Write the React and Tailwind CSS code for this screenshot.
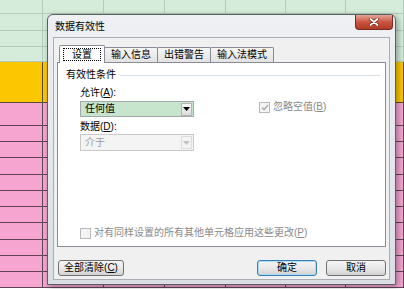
import React from 'react';

const COLS = ['w-[43px]', 'w-[61px]', 'w-[61px]', 'w-[61px]', 'w-[60px]', 'w-[60px]', 'w-[58px]'];

const TONES = {
  green: 'bg-[#d4ecd9] border-[#b4ccbb]',
  yellow: 'bg-[#fdc700] border-[#5d4b3c]',
  pink: 'bg-[#f6a4d0] border-[#5e4656]',
};

const ROWS = [
  ['h-[14px]', 'green'],
  ['h-[17px]', 'green'],
  ['h-[16px]', 'green'],
  ['h-[15px]', 'green'],
  ['h-[41px]', 'yellow'],
  ['h-[23px]', 'pink'],
  ['h-[16px]', 'pink'],
  ['h-[16px]', 'pink'],
  ['h-[17px]', 'pink'],
  ['h-[16px]', 'pink'],
  ['h-[16px]', 'pink'],
  ['h-[16px]', 'pink'],
  ['h-[17px]', 'pink'],
  ['h-[16px]', 'pink'],
  ['h-[16px]', 'pink'],
  ['h-[16px]', 'pink'],
];

const Sheet = () => (
  <div className="flex flex-col">
    {ROWS.map(([h, tone], i) => (
      <div key={i} className={`flex shrink-0 border-b ${h} ${TONES[tone]}`}>
        {COLS.map((w, j) => (
          <div key={j} className={`h-full shrink-0 border-r ${w} ${TONES[tone]}`} />
        ))}
      </div>
    ))}
  </div>
);

const Tab = ({ label, active }) => {
  if (active) {
    return (
      <div className="relative z-10 -mb-px flex h-[18px] w-[46px] items-center justify-center rounded-t-[2px] border border-b-0 border-[#898c95] bg-white">
        <span className="flex h-[13px] items-center border border-dotted border-black px-[8px]">{label}</span>
      </div>
    );
  }
  return (
    <div className="-ml-px flex h-[15px] items-center rounded-t-[2px] border border-b-0 border-[#898c95] bg-gradient-to-b from-[#f5f5f5] to-[#e2e2e2] px-[6px]">
      {label}
    </div>
  );
};

const Arrow = ({ color }) => (
  <svg width="7" height="4" viewBox="0 0 7 4">
    <path d="M0 0h7L3.5 4z" fill={color} />
  </svg>
);

const Combo = ({ value, disabled }) => (
  <div
    className={`flex w-[114px] items-center border pl-[4px] pr-px ${
      disabled
        ? 'h-[17px] border-[#c9c9c9] bg-[#f4f4f4] text-[#9a9a9a]'
        : 'h-[16px] border-[#a3a8ae] bg-[#c6e5cc] text-black'
    }`}
  >
    <span className="flex-1">{value}</span>
    <div
      className={`flex h-[13px] w-[11px] items-center justify-center border ${
        disabled ? 'border-[#dcdcdc] bg-[#f4f4f4]' : 'border-[#b5b5b5] bg-gradient-to-b from-[#f7f7f7] to-[#dcdcdc]'
      }`}
    >
      <Arrow color={disabled ? '#c4c4c4' : '#000'} />
    </div>
  </div>
);

const Check = ({ checked }) => (
  <div className="flex h-[11px] w-[11px] items-center justify-center border border-[#b8b8b8] bg-[#f4f4f4]">
    {checked && (
      <svg width="8" height="7" viewBox="0 0 8 7">
        <path d="M1 3.5l2 2.2L7 1" fill="none" stroke="#a9a9a9" strokeWidth="1.4" />
      </svg>
    )}
  </div>
);

const Button = ({ children, primary, className = '' }) => (
  <div
    className={`flex h-[16px] items-center justify-center rounded-[3px] border bg-gradient-to-b from-[#f4f4f4] via-[#e9e9e9] to-[#d2d2d2] ${
      primary ? 'border-[#3c7fb1] shadow-[inset_0_0_0_1px_#a9dbf6]' : 'border-[#707070]'
    } ${className}`}
  >
    {children}
  </div>
);

export default function App() {
  return (
    <div className="relative h-[289px] w-[404px] overflow-hidden font-['Liberation_Sans','Noto_Sans_CJK_SC',sans-serif] text-[10px] leading-[12px] text-black">
      <Sheet />

      <div className="absolute left-[47px] top-[14px] flex h-[271px] w-[349px] flex-col rounded-t-[6px] border border-[#5b5f66] bg-gradient-to-b from-[#eef0f3] to-[#dadee3] px-[5px] pb-[4px] shadow-[2px_2px_6px_rgba(0,0,0,0.35)]">
        <div className="flex h-[22px] shrink-0 items-start justify-between">
          <span className="mt-[6px] pl-[2px]">数据有效性</span>
          <div className="-mr-[3px] flex h-[15px] w-[38px] items-center justify-center rounded-b-[4px] border border-t-0 border-[#7a2a20] bg-gradient-to-b from-[#e3a597] via-[#c9553f] to-[#b23a24]">
            <svg width="10" height="8" viewBox="0 0 10 8">
              <path d="M1.5 1l7 6M8.5 1l-7 6" stroke="#5a1a10" strokeWidth="3" strokeLinecap="round" />
              <path d="M1.5 1l7 6M8.5 1l-7 6" stroke="#fff" strokeWidth="1.8" strokeLinecap="round" />
            </svg>
          </div>
        </div>

        <div className="flex flex-1 flex-col border border-[#a9aeb5] bg-[#f0f0f0] px-[3px]">
          <div className="flex h-[24px] shrink-0 items-end pl-[2px]">
            <Tab label="设置" active />
            <Tab label="输入信息" />
            <Tab label="出错警告" />
            <Tab label="输入法模式" />
          </div>

          <div className="flex h-[185px] shrink-0 flex-col border border-[#898c95] bg-white pl-[8px] pr-[5px] pt-[6px]">
            <div className="flex items-center gap-[4px]">
              <span>有效性条件</span>
              <div className="h-px flex-1 bg-[#d5dfe5]" />
            </div>

            <div className="pl-[14px]">
              <div className="mt-[6px]">
                允许(<u>A</u>):
              </div>
              <div className="mt-[2px] flex items-start">
                <Combo value="任何值" />
                <div className="ml-[65px] flex items-center gap-[3px] text-[#8a8a8a]">
                  <Check checked />
                  <span>
                    忽略空值(<u>B</u>)
                  </span>
                </div>
              </div>
              <div className="mt-[4px]">
                数据(<u>D</u>):
              </div>
              <div className="mt-px">
                <Combo value="介于" disabled />
              </div>

              <div className="mt-[76px] flex items-center gap-[3px] text-[#8a8a8a]">
                <Check />
                <span>
                  对有同样设置的所有其他单元格应用这些更改(<u>P</u>)
                </span>
              </div>
            </div>
          </div>

          <div className="mt-[13px] flex items-center">
            <Button className="ml-px w-[66px]">
              全部清除(<u>C</u>)
            </Button>
            <Button primary className="ml-auto w-[60px]">
              确定
            </Button>
            <Button className="ml-[9px] w-[60px]">取消</Button>
          </div>
        </div>
      </div>
    </div>
  );
}
